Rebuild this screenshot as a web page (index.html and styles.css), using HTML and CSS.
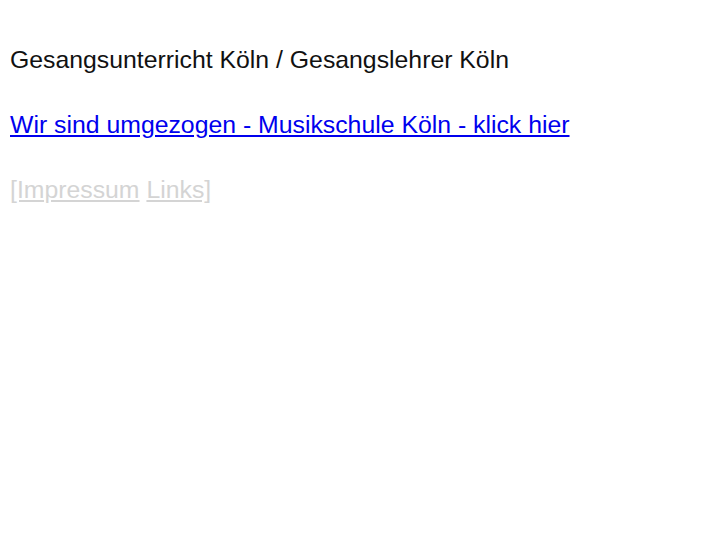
FILE: index.html
```html
<!DOCTYPE html>
<html lang="de">
<head>
    <meta charset="UTF-8">
    <meta name="viewport" content="width=device-width, initial-scale=1.0">
    <title>Gesangsunterricht Köln / Gesangslehrer Köln</title>
    <link rel="stylesheet" href="styles.css">
</head>
<body>
    <div class="page">
        <p class="title">Gesangsunterricht Köln / Gesangslehrer Köln</p>
        <p><a class="move-link" href="#">Wir sind umgezogen - Musikschule Köln - klick hier</a></p>
        <p class="footer-links"><a href="#">[Impressum</a> <a href="#">Links]</a></p>
    </div>
</body>
</html>
```

FILE: styles.css
```css
body {
    margin: 0;
    background-color: #ffffff;
    font-family: 'Liberation Sans', Arial, sans-serif;
    font-size: 24.8px;
    color: #111;
}

.page {
    padding: 45px 10px;
}

p {
    margin: 0 0 36px;
    line-height: 29px;
}

.move-link {
    color: #0000ee;
}

.footer-links a {
    color: #d4d4d4;
}
```
